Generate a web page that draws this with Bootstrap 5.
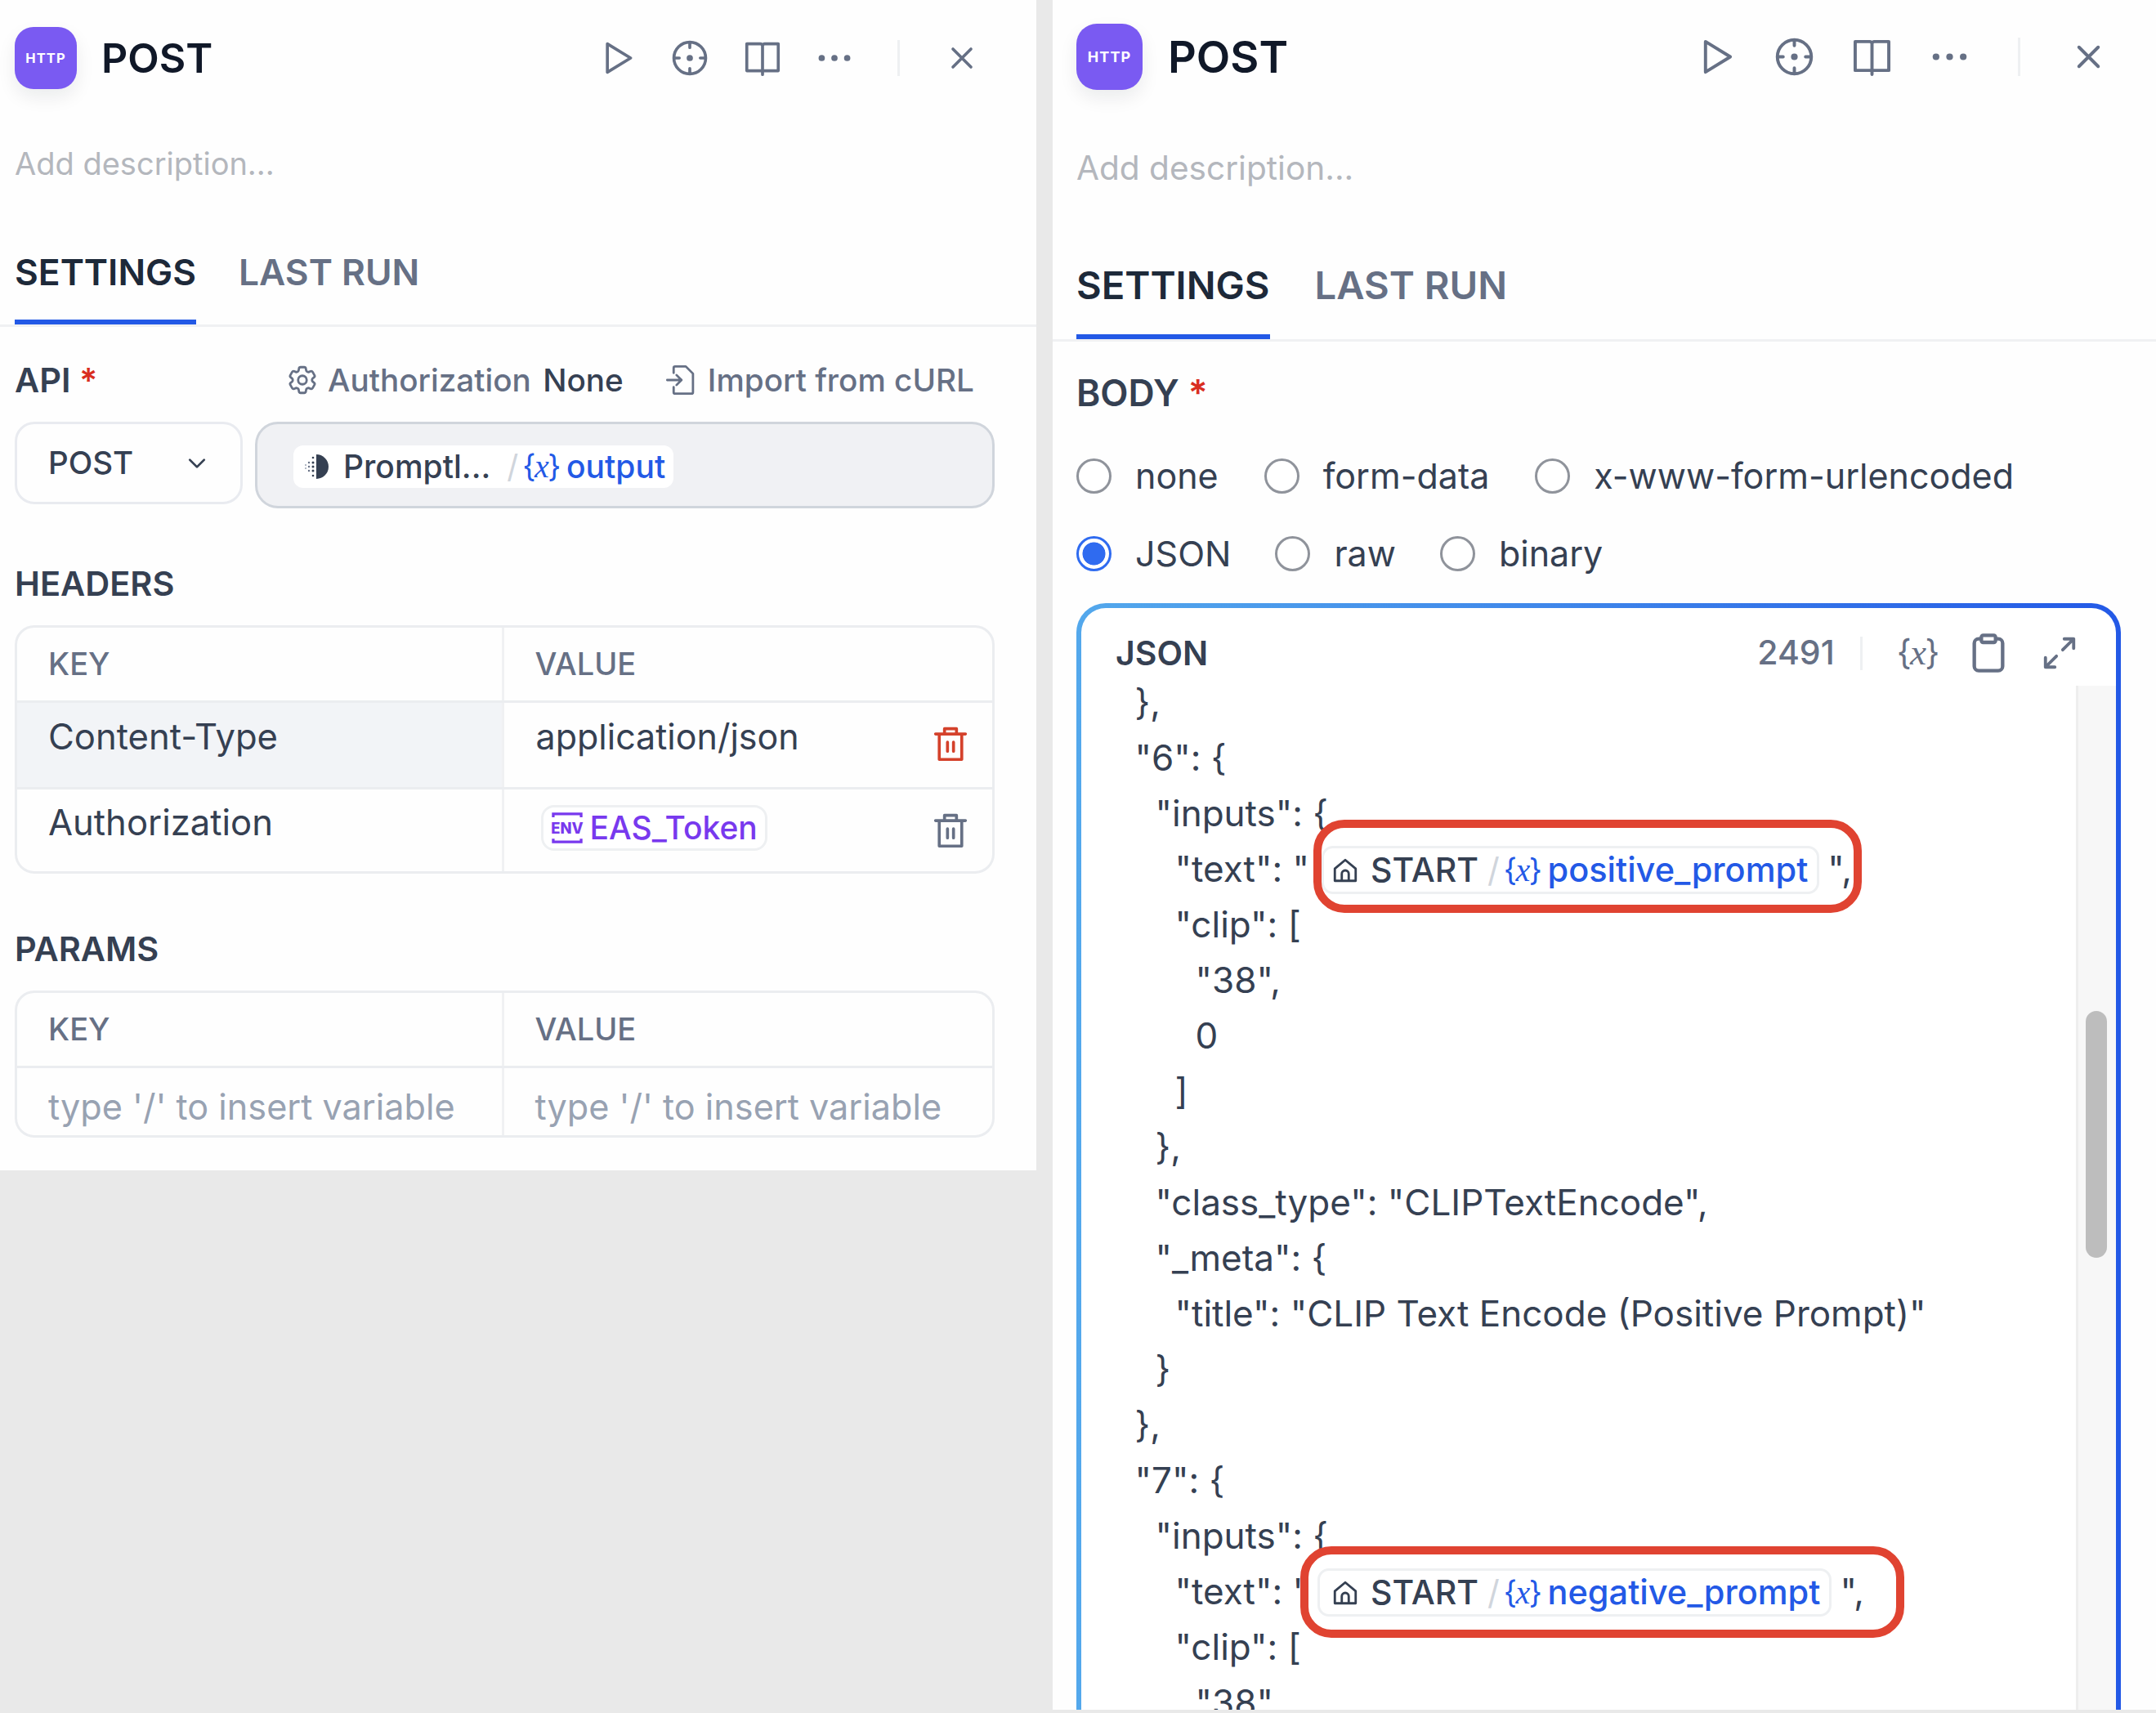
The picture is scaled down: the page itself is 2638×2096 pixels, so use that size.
<!doctype html>
<html lang="en">
<head>
<meta charset="utf-8">
<title>POST</title>
<link rel="stylesheet" href="https://cdn.jsdelivr.net/npm/bootstrap@5.3.0/dist/css/bootstrap.min.css">
<style>
html,body{height:100%;overflow:hidden}
body{background:#e9e9e9;font-family:Inter,"Liberation Sans",sans-serif;color:#354052;--blue:#2359e6}
.stage{gap:20px;height:2096px}
.pane{background:#fefefe;flex:none;overflow:hidden}
.pane-a{width:1268px;height:1432px;padding-left:18px}
.pane-b{width:1350px;height:2092px;padding-left:29px}
.app-icon{background:#7a5af2;color:#fff;font-weight:700;letter-spacing:1.1px;box-shadow:0 10px 22px rgba(16,24,40,.08);flex:none}
.pane-a .app-icon{width:76px;height:76px;border-radius:23px;font-size:16.5px}
.pane-b .app-icon{width:81px;height:81px;border-radius:25px;font-size:18px}
.pane-a .head{margin-top:33px;height:76px;padding-right:69px}
.pane-b .head{margin-top:29px;height:81px;padding-right:59px}
.title{font-weight:600;color:#101828}
.pane-a .title{font-size:50px;margin-left:30px}
.pane-b .title{font-size:54px;margin-left:31px}
.act{color:#667085}
.act svg{display:block;fill:none;stroke:currentColor;stroke-width:2;stroke-linecap:round;stroke-linejoin:round}
.pane-a .act{gap:44.5px}
.pane-a .act svg{width:44px;height:44px}
.pane-b .act{gap:48px}
.pane-b .act svg{width:47px;height:47px}
.vsep{width:3px;background:#eef0f2}
.pane-a .vsep{height:44px;margin:0 54px 0 55px}
.pane-b .vsep{height:47px;margin:0 60px 0 60px}
.desc{color:#b4b7bd}
.pane-a .desc{font-size:38px;line-height:50px;margin-top:66px}
.pane-b .desc{font-size:40.6px;line-height:54px;margin-top:69px}
.tabstrip{border-bottom:3px solid #f0f1f3}
.tabstrip .nav-link{padding:0;color:#667085;font-weight:600;border-bottom:6px solid transparent}
.tabstrip .nav-link.active{color:#1d2939;border-bottom-color:var(--blue)}
.pane-a .tabstrip{margin:83px 0 0 -18px;padding-left:18px;gap:52px}
.pane-a .tabstrip .nav-link{font-size:44.3px;line-height:50px;padding-bottom:33px}
.pane-b .tabstrip{margin:89px 0 0 -29px;padding-left:29px;gap:55px}
.pane-b .tabstrip .nav-link{font-size:47.2px;line-height:54px;padding-bottom:33px}
.label{font-weight:600;color:#354052;font-size:41.5px;line-height:50px}
.lab-body{font-size:44.5px;margin-top:38px}
.lab-json{font-size:41px}
.req{color:#d92d20;font-weight:600}
.toolrow{margin-top:40px;width:1199px}
.tool{font-size:38.700px;line-height:50px;color:#667085;font-weight:500}
.tool svg{width:42px;height:42px;fill:none;stroke:currentColor;stroke-width:1.6;stroke-linecap:round;stroke-linejoin:round;flex:none}
.tool b{font-weight:500;color:#354052}
.tool-a{gap:10px}
.tool-b{gap:12px;margin:0 25px 0 49px}
.ctrl{margin-top:26px;width:1199px;gap:15px}
.verb{width:279px;height:101px;border:3px solid #e9ebf0;border-radius:24px;padding:0 38px 0 38px;font-size:38.500px;font-weight:500;color:#354052}
.verb svg{width:30px;height:30px;fill:none;stroke:#354052;stroke-width:2.2;stroke-linecap:round;stroke-linejoin:round}
.urlbox{height:106px;background:#f0f1f4;border:3px solid #d0d5dc;border-radius:28px;padding:26px 0 0 44px}
.vpill{display:inline-flex;align-items:center;background:#fff;border-radius:12px;height:52px;padding:0 10px 0 13px;font-size:39px;font-weight:500;color:#354052}
.vpill .nm{color:var(--blue)}
.vpill .sl{color:#d0d5dc;font-weight:400;margin:0 5px 0 20px}
.vx{font-weight:400;letter-spacing:-1.5px;font-size:38px;color:var(--blue);margin-right:8px}
.vx i{font-family:"Liberation Serif",serif;font-size:40px}
.sect{margin-top:67px}
.grid-wrap{width:1199px;margin-top:26px;border:3px solid #ebedf0;border-radius:24px;overflow:hidden}
.kv{table-layout:fixed;--bs-table-bg:transparent;--bs-table-color:#354052;margin:0}
.kv th,.kv td{padding:0 0 0 38px;border-bottom:3px solid #ebedf0;vertical-align:top;box-shadow:none}
.kv tr>*:first-child{width:594px;border-right:3px solid #f0f1f3}
.kv tr:last-child td{border-bottom:0}
.kv th{height:90px;vertical-align:middle;font-size:38px;font-weight:500;color:#667085}
.kv td{font-size:43.6px;line-height:50px;font-weight:400}
.kv td.tall{height:106px;padding-top:17px}
.kv td.low{height:102px;padding-top:16px}
.kv td.hint{height:84px;padding-top:22px;color:#98a2b2;font-size:43.2px}
.kv td.hover{background:#f2f4f7}
.kv .val{font-size:43px;margin:-1px 0 0 1px}
.trash{width:44px;height:44px;fill:none;stroke:#667085;stroke-width:2;stroke-linejoin:round;stroke-linecap:round;flex:none;margin:12px 29px 0 auto}
.trash.hot{stroke:#d4412b}
.envpill{display:inline-flex;align-items:center;height:56px;border:3px solid #eef0f2;border-radius:16px;margin:3px 0 0 7px;padding:0 9px 0 8px;font-size:39px;font-weight:500;color:#7839ee;background:#fff}
.envpill svg{width:42px;height:42px;margin-right:7px}
.envpill text{font-family:Inter,sans-serif;font-weight:800;font-size:14px;fill:#7839ee}
.rad-row{font-size:43px;line-height:50px;color:#354052;gap:56px}
.rad-one{margin-top:51px}
.rad-two{margin-top:45px;gap:54px}
.rad-row .form-check{padding:0;margin:0;display:flex;align-items:center;min-height:0}
.rad-row .form-check-input{width:43px;height:43px;margin:0 29px 0 0;border:3px solid #8f939b;background-color:#fff;float:none;flex:none}
.rad-row .form-check-input:checked{border-color:#2f6bf0;background-color:#fff;background-image:radial-gradient(circle,#2f6bf0 0 52%,#fff 55%)}
.rad-row .form-check-label{opacity:1}
.editor{margin-top:36px;width:1278px;height:1400px;border-radius:36px 36px 0 0;padding:6px 6px 0;background:linear-gradient(90deg,#53a8ec 0%,#3f87ea 45%,#2359e6 100%)}
.editor-in{height:100%;background:#fff;border-radius:30px 30px 0 0;position:relative;overflow:hidden}
.ed-head{height:81px;padding:29px 46px 0 42px;position:relative;z-index:2}
.ed-head .count{font-size:41px;font-weight:500;color:#667085}
.ed-head .vsep{height:41px;margin:0 42px 0 31px}
.ed-head .vx{color:#667085;font-size:42px;margin:0 35px 0 0}
.ed-head .vx i{font-size:45px}
.ed-head svg{fill:none;stroke:#667085;stroke-width:2;stroke-linecap:round;stroke-linejoin:round;flex:none}
.ed-clip{width:52px;height:52px;margin-right:38px}
.ed-exp{width:46px;height:46px}
.code{font-size:44px;line-height:68px;color:#354052;padding-left:65.5px}
.ln{height:68px;white-space:pre;position:relative}
.ln.i1{padding-left:25px}.ln.i2{padding-left:49px}.ln.i3{padding-left:74px}
.track{position:absolute;top:95px;bottom:0;right:0;width:49px;background:#f7f7f7;border-left:3px solid #eeeeee;z-index:3}
.thumb{position:absolute;left:9px;top:398px;width:26px;height:302px;border-radius:13px;background:#bdbdbd}
.cpill{display:inline-flex;align-items:center;vertical-align:middle;height:59px;border:3px solid #eef0f2;border-radius:14px;background:#fff;font-size:41px;font-weight:500;color:#354052;margin:-4px 10px 0 15px;padding:0 11px 0 9px;line-height:1}
.cpill.wide{margin-left:10px;padding-left:14px}
.cpill svg{width:34px;height:34px;fill:none;stroke:#354052;stroke-width:2;stroke-linecap:round;stroke-linejoin:round;margin-right:14px}
.cpill .sl{color:#d0d5dc;font-weight:400;margin:0 5px 0 11px}
.cpill .vx{margin-right:8px}
.cpill .nm{color:var(--blue);font-size:41.5px}
.mark-box{position:absolute;border:10.5px solid #e04331;border-radius:38px;z-index:2}
.mark-one{left:218.5px;top:-26px;width:671px;height:114px}
.mark-two{left:202.5px;top:-21px;width:739px;height:112px}
</style>
</head>
<body>
<svg width="0" height="0" class="position-absolute">
<defs>
<symbol id="i-play" viewBox="0 0 24 24"><path d="M5 2.500 20.500 12 5 21.500z"/></symbol>
<symbol id="i-target" viewBox="0 0 24 24"><circle cx="12" cy="12" r="10.600"/><path d="M12 1.500v3.500M12 19v3.500M1.500 12H5M19 12h3.500"/><circle cx="12" cy="12" r="1.100" fill="currentColor"/></symbol>
<symbol id="i-book" viewBox="0 0 24 24"><path d="M1.500 2.500h9a1.500 1.500 0 0 1 1.500 1.500 1.500 1.500 0 0 1 1.500-1.500h9v18h-21zM12 4v19"/></symbol>
<symbol id="i-dots" viewBox="0 0 24 24"><circle cx="3.500" cy="12" r="2.100" fill="currentColor" stroke="none"/><circle cx="12" cy="12" r="2.100" fill="currentColor" stroke="none"/><circle cx="20.500" cy="12" r="2.100" fill="currentColor" stroke="none"/></symbol>
<symbol id="i-x" viewBox="0 0 24 24"><path d="M6 6l12 12M18 6 6 18"/></symbol>
<symbol id="i-gear" viewBox="0 0 24 24"><path d="M9.594 3.94c.09-.542.56-.94 1.11-.94h2.593c.55 0 1.02.398 1.11.94l.213 1.281c.063.374.313.686.645.87.074.04.147.083.22.127.324.196.72.257 1.075.124l1.217-.456a1.125 1.125 0 011.37.49l1.296 2.247a1.125 1.125 0 01-.26 1.431l-1.003.827c-.293.24-.438.613-.431.992a6.759 6.759 0 010 .255c-.007.378.138.75.43.99l1.005.828c.424.35.534.954.26 1.43l-1.298 2.247a1.125 1.125 0 01-1.369.491l-1.217-.456c-.355-.133-.75-.072-1.076.124a6.57 6.57 0 01-.22.128c-.331.183-.581.495-.644.869l-.213 1.28c-.09.543-.56.941-1.11.941h-2.594c-.55 0-1.02-.398-1.11-.94l-.213-1.281c-.062-.374-.312-.686-.644-.87a6.52 6.52 0 01-.22-.127c-.325-.196-.72-.257-1.076-.124l-1.217.456a1.125 1.125 0 01-1.369-.49l-1.297-2.247a1.125 1.125 0 01.26-1.431l1.004-.827c.292-.24.437-.613.43-.992a6.932 6.932 0 010-.255c.007-.378-.138-.75-.43-.99l-1.004-.828a1.125 1.125 0 01-.26-1.43l1.297-2.247a1.125 1.125 0 011.37-.491l1.216.456c.356.133.751.072 1.076-.124.072-.044.146-.087.22-.128.332-.183.582-.495.644-.869l.214-1.281z"/><circle cx="12" cy="12" r="3"/></symbol>
<symbol id="i-import" viewBox="0 0 24 24"><path d="M7 7V3.500a1 1 0 0 1 1-1h7.500L20.500 7.500V20.500a1 1 0 0 1-1 1H8a1 1 0 0 1-1-1V17M2.500 12h10M9 8.500l3.500 3.500L9 15.500"/></symbol>
<symbol id="i-down" viewBox="0 0 24 24"><path d="M5 8.500l7 7 7-7"/></symbol>
<symbol id="i-trash" viewBox="0 0 24 24"><path d="M8 5V2h8v3M2 5.500h20M4.500 5.500V22.500h15V5.500M10 11v6M14 11v6"/></symbol>
<symbol id="i-home" viewBox="0 0 24 24"><path d="M3 10.500 12 3l9 7.500V21H3zM9 21v-6a3 3 0 0 1 6 0v6"/></symbol>
<symbol id="i-clip" viewBox="0 0 24 24"><path d="M8 4H6.500A2.500 2.500 0 0 0 4 6.500v13A2.500 2.500 0 0 0 6.500 22h11a2.500 2.500 0 0 0 2.500-2.500v-13A2.500 2.500 0 0 0 17.500 4H16M9 2h6a1 1 0 0 1 1 1v2a1 1 0 0 1-1 1H9a1 1 0 0 1-1-1V3a1 1 0 0 1 1-1z"/></symbol>
<symbol id="i-expand" viewBox="0 0 24 24"><path d="M14 10l7-7M15 3h6v6M10 14l-7 7M3 15v6h6"/></symbol>
<symbol id="i-prompt" viewBox="0 0 32 32"><path d="M15 1a15 15 0 0 1 0 30z" fill="#354052"/><circle cx="11" cy="5" r="1.300" fill="#354052"/><circle cx="11" cy="11" r="1.500" fill="#354052"/><circle cx="11" cy="16" r="1.500" fill="#354052"/><circle cx="11" cy="21" r="1.500" fill="#354052"/><circle cx="11" cy="27" r="1.300" fill="#354052"/><circle cx="6" cy="11" r="1.200" fill="#667085"/><circle cx="6" cy="16" r="1.200" fill="#667085"/><circle cx="6" cy="21" r="1.200" fill="#667085"/><circle cx="2" cy="14" r="1" fill="#98a2b2"/><circle cx="2" cy="18" r="1" fill="#98a2b2"/></symbol>
</defs>
</svg>

<div class="stage d-flex align-items-start">
  <section class="pane pane-a">
    <div class="head d-flex align-items-center">
      <div class="app-icon d-flex align-items-center justify-content-center">HTTP</div>
      <div class="title">POST</div>
      <div class="act d-flex align-items-center ms-auto">
        <svg><use href="#i-play"/></svg><svg><use href="#i-target"/></svg><svg><use href="#i-book"/></svg><svg><use href="#i-dots"/></svg>
      </div>
      <div class="vsep"></div>
      <div class="act"><svg><use href="#i-x"/></svg></div>
    </div>
    <div class="desc">Add description...</div>
    <ul class="nav tabstrip">
      <li class="nav-item"><a class="nav-link active" href="#">SETTINGS</a></li>
      <li class="nav-item"><a class="nav-link" href="#">LAST RUN</a></li>
    </ul>
    <div class="toolrow d-flex align-items-center">
      <div class="label">API <span class="req">*</span></div>
      <div class="tool tool-a d-flex align-items-center ms-auto">
        <svg><use href="#i-gear"/></svg><span>Authorization <b class="ms-1">None</b></span>
      </div>
      <div class="tool tool-b d-flex align-items-center">
        <svg><use href="#i-import"/></svg><span>Import from cURL</span>
      </div>
    </div>
    <div class="ctrl d-flex align-items-start">
      <div class="verb d-flex align-items-center justify-content-between">POST<svg><use href="#i-down"/></svg></div>
      <div class="urlbox flex-grow-1">
        <span class="vpill"><svg width="32" height="32" class="me-3"><use href="#i-prompt"/></svg>Promptl...<span class="sl">/</span><span class="vx">{<i>x</i>}</span><span class="nm">output</span></span>
      </div>
    </div>
    <div class="label sect">HEADERS</div>
    <div class="grid-wrap">
      <table class="table kv">
        <thead><tr><th>KEY</th><th>VALUE</th></tr></thead>
        <tbody>
          <tr><td class="tall hover">Content-Type</td><td class="tall"><div class="d-flex val">application/json<svg class="trash hot"><use href="#i-trash"/></svg></div></td></tr>
          <tr><td class="low">Authorization</td><td class="low"><div class="d-flex"><span class="envpill"><svg viewBox="0 0 32 32"><path d="M3 6V3h26v3M3 26v3h26v-3" fill="none" stroke="#7839ee" stroke-width="2.500"/><text x="16" y="21" text-anchor="middle">ENV</text></svg>EAS_Token</span><svg class="trash"><use href="#i-trash"/></svg></div></td></tr>
        </tbody>
      </table>
    </div>
    <div class="label sect">PARAMS</div>
    <div class="grid-wrap">
      <table class="table kv">
        <thead><tr><th>KEY</th><th>VALUE</th></tr></thead>
        <tbody><tr><td class="hint">type '/' to insert variable</td><td class="hint">type '/' to insert variable</td></tr></tbody>
      </table>
    </div>
  </section>

  <section class="pane pane-b">
    <div class="head d-flex align-items-center">
      <div class="app-icon d-flex align-items-center justify-content-center">HTTP</div>
      <div class="title">POST</div>
      <div class="act d-flex align-items-center ms-auto">
        <svg><use href="#i-play"/></svg><svg><use href="#i-target"/></svg><svg><use href="#i-book"/></svg><svg><use href="#i-dots"/></svg>
      </div>
      <div class="vsep"></div>
      <div class="act"><svg><use href="#i-x"/></svg></div>
    </div>
    <div class="desc">Add description...</div>
    <ul class="nav tabstrip">
      <li class="nav-item"><a class="nav-link active" href="#">SETTINGS</a></li>
      <li class="nav-item"><a class="nav-link" href="#">LAST RUN</a></li>
    </ul>
    <div class="label lab-body">BODY <span class="req">*</span></div>
    <div class="rad-row rad-one d-flex">
      <div class="form-check"><input class="form-check-input" type="radio" name="b" id="r1"><label class="form-check-label" for="r1">none</label></div>
      <div class="form-check"><input class="form-check-input" type="radio" name="b" id="r2"><label class="form-check-label" for="r2">form-data</label></div>
      <div class="form-check"><input class="form-check-input" type="radio" name="b" id="r3"><label class="form-check-label" for="r3">x-www-form-urlencoded</label></div>
    </div>
    <div class="rad-row rad-two d-flex">
      <div class="form-check"><input class="form-check-input" type="radio" name="b" id="r4" checked><label class="form-check-label" for="r4">JSON</label></div>
      <div class="form-check"><input class="form-check-input" type="radio" name="b" id="r5"><label class="form-check-label" for="r5">raw</label></div>
      <div class="form-check"><input class="form-check-input" type="radio" name="b" id="r6"><label class="form-check-label" for="r6">binary</label></div>
    </div>
    <div class="editor">
      <div class="editor-in">
        <div class="ed-head d-flex align-items-center">
          <div class="label lab-json">JSON</div>
          <div class="count ms-auto">2491</div>
          <div class="vsep"></div>
          <div class="vx">{<i>x</i>}</div>
          <svg class="ed-clip"><use href="#i-clip"/></svg>
          <svg class="ed-exp"><use href="#i-expand"/></svg>
        </div>
        <div class="code">
          <div class="ln">},</div>
          <div class="ln">"6": {</div>
          <div class="ln i1">"inputs": {</div>
          <div class="ln i2">"text": "<span class="cpill"><svg><use href="#i-home"/></svg>START<span class="sl">/</span><span class="vx">{<i>x</i>}</span><span class="nm">positive_prompt</span></span>",<div class="mark-box mark-one"></div></div>
          <div class="ln i2">"clip": [</div>
          <div class="ln i3">"38",</div>
          <div class="ln i3">0</div>
          <div class="ln i2">]</div>
          <div class="ln i1">},</div>
          <div class="ln i1">"class_type": "CLIPTextEncode",</div>
          <div class="ln i1">"_meta": {</div>
          <div class="ln i2">"title": "CLIP Text Encode (Positive Prompt)"</div>
          <div class="ln i1">}</div>
          <div class="ln">},</div>
          <div class="ln">"7": {</div>
          <div class="ln i1">"inputs": {</div>
          <div class="ln i2">"text": "<span class="cpill wide"><svg><use href="#i-home"/></svg>START<span class="sl">/</span><span class="vx">{<i>x</i>}</span><span class="nm">negative_prompt</span></span>",<div class="mark-box mark-two"></div></div>
          <div class="ln i2">"clip": [</div>
          <div class="ln i3">"38"</div>
        </div>
        <div class="track"><div class="thumb"></div></div>
      </div>
    </div>
  </section>
</div>
<script src="https://cdn.jsdelivr.net/npm/bootstrap@5.3.0/dist/js/bootstrap.bundle.min.js"></script>
</body>
</html>
